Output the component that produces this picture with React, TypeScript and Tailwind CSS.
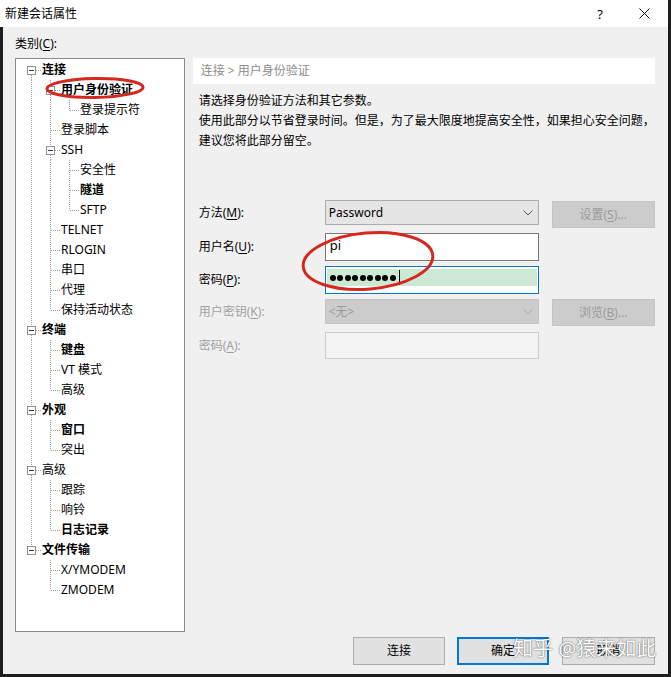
import React from "react";

type Node = { label: string; bold?: boolean; children?: Node[] };

const tree: Node[] = [
  {
    label: "连接",
    bold: true,
    children: [
      { label: "用户身份验证", bold: true, children: [{ label: "登录提示符" }] },
      { label: "登录脚本" },
      {
        label: "SSH",
        children: [{ label: "安全性" }, { label: "隧道", bold: true }, { label: "SFTP" }],
      },
      { label: "TELNET" },
      { label: "RLOGIN" },
      { label: "串口" },
      { label: "代理" },
      { label: "保持活动状态" },
    ],
  },
  {
    label: "终端",
    bold: true,
    children: [{ label: "键盘", bold: true }, { label: "VT 模式" }, { label: "高级" }],
  },
  {
    label: "外观",
    bold: true,
    children: [{ label: "窗口", bold: true }, { label: "突出" }],
  },
  {
    label: "高级",
    children: [{ label: "跟踪" }, { label: "响铃" }, { label: "日志记录", bold: true }],
  },
  {
    label: "文件传输",
    bold: true,
    children: [{ label: "X/YMODEM" }, { label: "ZMODEM" }],
  },
];

type Row = {
  label: string;
  bold?: boolean;
  level: number;
  hasChildren: boolean;
  isFirstRoot: boolean;
  isLast: boolean;
  ancestorsLast: boolean[];
};

function flatten(nodes: Node[], level: number, ancestorsLast: boolean[], out: Row[]) {
  nodes.forEach((n, i) => {
    const isLast = i === nodes.length - 1;
    out.push({
      label: n.label,
      bold: n.bold,
      level,
      hasChildren: !!n.children,
      isFirstRoot: level === 0 && i === 0,
      isLast,
      ancestorsLast,
    });
    if (n.children) flatten(n.children, level + 1, [...ancestorsLast, isLast], out);
  });
}

const rows: Row[] = [];
flatten(tree, 0, [], rows);

const LINE = "#a0a0a0";

function Cell({
  top,
  bottom,
  horiz,
  toggle,
}: {
  top?: boolean;
  bottom?: boolean;
  horiz?: boolean;
  toggle?: boolean;
}) {
  return (
    <svg width="19" height="20" viewBox="0 0 19 20" className="shrink-0 block">
      {top && (
        <line x1="9.5" x2="9.5" y1="0" y2={toggle ? 6 : 10.5} stroke={LINE} strokeDasharray="1 1" />
      )}
      {bottom && (
        <line x1="9.5" x2="9.5" y1={toggle ? 15 : 10} y2="20" stroke={LINE} strokeDasharray="1 1" />
      )}
      {horiz && (
        <line x1={toggle ? 14 : 10} x2="19" y1="10.5" y2="10.5" stroke={LINE} strokeDasharray="1 1" />
      )}
      {toggle && (
        <g>
          <rect x="5.5" y="6.5" width="8" height="8" fill="#fff" stroke="#919191" />
          <line x1="7" x2="12" y1="10.5" y2="10.5" stroke="#333" />
        </g>
      )}
    </svg>
  );
}

function TreeRow({ r }: { r: Row }) {
  const cells: React.ReactNode[] = [];
  for (let c = 0; c < r.level; c++) {
    cells.push(<Cell key={c} top={!r.ancestorsLast[c]} bottom={!r.ancestorsLast[c]} />);
  }
  cells.push(
    <Cell
      key="self"
      top={!r.isFirstRoot}
      bottom={!r.isLast}
      horiz
      toggle={r.hasChildren}
    />
  );
  return (
    <div className="flex h-[20px] items-center">
      {cells}
      <span
        className={`pl-[1px] whitespace-nowrap text-[12px] leading-[20px] text-black ${
          r.bold ? "font-bold" : ""
        }`}
      >
        {r.label}
      </span>
    </div>
  );
}

function U({ children }: { children: React.ReactNode }) {
  return <span className="underline underline-offset-2">{children}</span>;
}

function Chevron({ color }: { color: string }) {
  return (
    <svg width="10" height="6" viewBox="0 0 10 6" className="block">
      <polyline points="0.5,0.5 5,5 9.5,0.5" fill="none" stroke={color} strokeWidth="1" />
    </svg>
  );
}

export default function App() {
  return (
    <div className="relative flex h-[677px] w-[671px] flex-col bg-[#1e1e1e] pr-[3px] font-['Noto_Sans','Noto_Sans_CJK_SC',sans-serif] text-[12px] text-black">
      {/* Title bar */}
      <div className="flex h-[27px] items-center bg-white pl-[5px]">
        <span className="text-[12px] leading-[16px]">新建会话属性</span>
        <div className="flex-1" />
        <span className="mr-[36px] text-[13px] leading-[16px]">?</span>
        <svg width="11" height="11" viewBox="0 0 11 11" className="mr-[18px] block">
          <line x1="0.5" y1="0.5" x2="10.5" y2="10.5" stroke="#111" strokeWidth="1" />
          <line x1="10.5" y1="0.5" x2="0.5" y2="10.5" stroke="#111" strokeWidth="1" />
        </svg>
      </div>

      {/* Body */}
      <div className="mb-[3px] ml-[3px] flex flex-1 flex-col bg-[#f0f0f0] pl-[12px] pr-[13px]">
        <div className="mt-[9px] h-[16px] text-[12px] leading-[16px]">
          类别(<U>C</U>):
        </div>

        <div className="mt-[6px] flex h-[574px] gap-[8px]">
          {/* Tree */}
          <div className="w-[170px] border border-[#8a8a8a] bg-white pl-[6px] pt-[1px]">
            {rows.map((r, i) => (
              <TreeRow key={i} r={r} />
            ))}
          </div>

          {/* Right panel */}
          <div className="flex w-[463px] flex-col">
            <div className="flex h-[26px] items-center bg-white pl-[8px] text-[12px] text-[#8c8c8c]">
              连接 &gt; 用户身份验证
            </div>
            <div className="mt-[7px] pl-[6px] text-[12px] leading-[20px]">
              <div>请选择身份验证方法和其它参数。</div>
              <div>使用此部分以节省登录时间。但是，为了最大限度地提高安全性，如果担心安全问题，</div>
              <div>建议您将此部分留空。</div>
            </div>

            <div className="mt-[49px] flex flex-col gap-[5px] pl-[6px]">
              {/* Method */}
              <div className="flex h-[28px] items-start">
                <div className="flex h-[25px] w-[126px] items-center">
                  方法(<U>M</U>):
                </div>
                <div className="flex h-[25px] w-[214px] items-center justify-between border border-[#adadad] bg-[#e5e5e5] pl-[3px] pr-[5px]">
                  <span>Password</span>
                  <Chevron color="#555" />
                </div>
                <div className="ml-[13px] mt-[1px] flex h-[27px] w-[103px] items-center justify-center border border-[#c4c4c4] bg-[#cccccc] text-[#9a9a9a]">
                  设置(<U>S</U>)...
                </div>
              </div>

              {/* Username */}
              <div className="flex h-[28px] items-center">
                <div className="w-[126px]">
                  用户名(<U>U</U>):
                </div>
                <div className="flex h-[28px] w-[214px] items-center border border-[#7a7a7a] bg-white pb-[2px] pl-[4px]">
                  <span className="text-[13px]">pi</span>
                </div>
              </div>

              {/* Password */}
              <div className="flex h-[28px] items-center">
                <div className="w-[126px]">
                  密码(<U>P</U>):
                </div>
                <div className="h-[28px] w-[214px] border border-[#0078d7] bg-white px-[1px] pt-[2px]">
                  <div className="flex h-[17px] items-center bg-[#cde8d4] pl-[3px]">
                    <div className="flex gap-[1.5px]">
                      {Array.from({ length: 9 }).map((_, i) => (
                        <span key={i} className="block h-[6px] w-[6px] rounded-full bg-black" />
                      ))}
                    </div>
                    <span className="ml-[3px] block h-[15px] w-[1px] bg-black" />
                  </div>
                </div>
              </div>

              {/* Key */}
              <div className="flex h-[28px] items-start">
                <div className="flex h-[25px] w-[126px] items-center text-[#a0a0a0]">
                  用户密钥(<U>K</U>):
                </div>
                <div className="flex h-[25px] w-[214px] items-center justify-between border border-[#c4c4c4] bg-[#cccccc] pl-[3px] pr-[5px] text-[#9a9a9a]">
                  <span>&lt;无&gt;</span>
                  <Chevron color="#a8a8a8" />
                </div>
                <div className="ml-[13px] flex h-[27px] w-[103px] items-center justify-center border border-[#c4c4c4] bg-[#cccccc] text-[#9a9a9a]">
                  浏览(<U>B</U>)...
                </div>
              </div>

              {/* Passphrase */}
              <div className="flex h-[27px] items-center">
                <div className="w-[126px] text-[#a0a0a0]">
                  密码(<U>A</U>):
                </div>
                <div className="h-[27px] w-[214px] border border-[#cccccc] bg-[#f3f3f3]" />
              </div>
            </div>
          </div>
        </div>

        {/* Buttons */}
        <div className="mt-[5px] flex h-[28px] justify-end">
          <div className="flex h-[28px] w-[92px] items-center justify-center border border-[#adadad] bg-[#e1e1e1]">
            连接
          </div>
          <div className="ml-[12px] flex h-[28px] w-[92px] items-center justify-center border-2 border-[#0078d7] bg-[#e1e1e1]">
            确定
          </div>
          <div className="ml-[13px] flex h-[28px] w-[93px] items-center justify-center border border-[#adadad] bg-[#e1e1e1]">
            取消
          </div>
        </div>
      </div>

      {/* Watermark */}
      <div className="pointer-events-none absolute left-[513px] top-[636px] whitespace-nowrap text-[20px] leading-[26px] text-white [text-shadow:0_0_1px_rgba(0,0,0,0.6),0_0_2px_rgba(0,0,0,0.35)]">
        知乎 @猿来如此
      </div>

      {/* Red annotation ellipses */}
      <svg
        className="pointer-events-none absolute left-0 top-0"
        width="671"
        height="677"
        viewBox="0 0 671 677"
      >
        <ellipse cx="95" cy="88" rx="48" ry="9.5" fill="none" stroke="#d5281f" strokeWidth="3" transform="rotate(-1 95 88)" />
        <ellipse cx="368" cy="261" rx="65" ry="28" fill="none" stroke="#d5281f" strokeWidth="3" transform="rotate(-5 368 261)" />
      </svg>
    </div>
  );
}
